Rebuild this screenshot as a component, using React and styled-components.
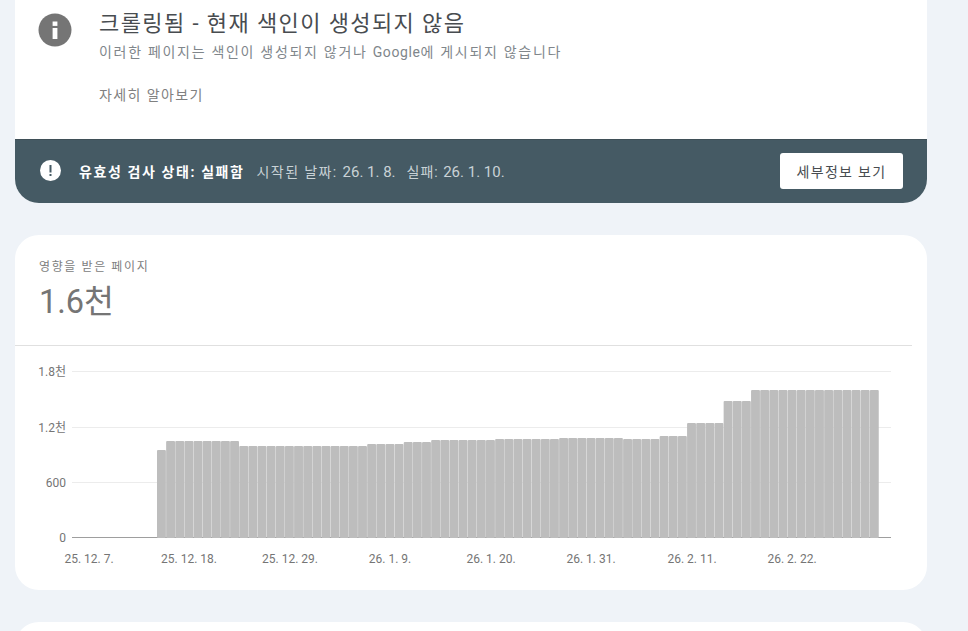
import React from 'react'
import styled, { createGlobalStyle } from 'styled-components'

const FONT = `Roboto, "Noto Sans CJK KR", "Noto Sans", sans-serif`

const GlobalStyle = createGlobalStyle`
  html, body {
    margin: 0;
    height: 100%;
    overflow: hidden;
    background: #eff3f8;
    font-family: ${FONT};
  }
`

const Page = styled.div`
  display: flex;
  flex-direction: column;
  gap: 32px;
  width: 912px;
  height: 631px;
  margin-left: 15px;
  overflow: hidden;
`

const Card = styled.section`
  flex: none;
  background: #fff;
  border-radius: 24px;
  overflow: hidden;
`

const TopCard = styled(Card)`
  border-radius: 0 0 24px 24px;
`

const Summary = styled.div`
  display: flex;
  height: 139px;
  box-sizing: border-box;
  padding: 9px 0 0 23px;
`

const InfoIcon = styled.svg`
  flex: none;
  width: 34px;
  height: 34px;
  margin-top: 4px;
  margin-right: 27px;
`

const Title = styled.h1`
  margin: 0;
  height: 30px;
  font-size: 22px;
  line-height: 30px;
  font-weight: 400;
  letter-spacing: 1.4px;
  color: #484c50;
`

const Subtitle = styled.p`
  margin: 3px 0 0;
  font-size: 14px;
  line-height: 20px;
  letter-spacing: 1.7px;
  color: #80868b;
`

// latin and digits keep their own width, only hangul runs wider
const Latin = styled.span`
  font-size: ${p => p.$size || 14}px;
  letter-spacing: ${p => p.$spacing}px;
`

const LearnMore = styled.a`
  display: block;
  margin-top: 23px;
  font-size: 14px;
  line-height: 20px;
  letter-spacing: 1.4px;
  color: #808080;
`

const Banner = styled.div`
  display: flex;
  align-items: center;
  height: 64px;
  padding: 0 24px 2px 25px;
  background: #455a64;
  border-top: 1px solid #3f4f57;
  box-sizing: border-box;
`

const BannerIcon = styled.svg`
  flex: none;
  width: 21px;
  height: 21px;
  margin-right: 18px;
`

const Status = styled.strong`
  font-size: 14px;
  font-weight: 700;
  letter-spacing: 1.6px;
  color: #fff;
`

const Meta = styled.span`
  margin-left: ${p => p.$gap}px;
  font-size: 14px;
  letter-spacing: ${p => p.$spacing}px;
  color: #c9d2d6;
`

const DetailsButton = styled.button`
  width: 123px;
  height: 36px;
  margin-left: auto;
  padding: 0;
  border: 0;
  border-radius: 3px;
  background: #fff;
  font-family: ${FONT};
  font-size: 14px;
  letter-spacing: 1.3px;
  color: #484c50;
`

const ChartCard = styled(Card)`
  height: 355px;
`

const LastCard = styled(Card)`
  height: 60px;
`

const MetricHead = styled.div`
  height: 111px;
  box-sizing: border-box;
  padding: 24px 0 0 24px;
  margin-right: 15px;
  border-bottom: 1px solid #e0e0e0;
`

const MetricLabel = styled.div`
  font-size: 12px;
  line-height: 16px;
  letter-spacing: 1.6px;
  color: #808080;
`

const MetricValue = styled.div`
  margin-top: 4px;
  font-size: 32.5px;
  line-height: 46px;
  font-weight: 400;
  color: #757575;
`

const Chart = styled.svg`
  display: block;
  width: 912px;
  height: 244px;
`

const AxisText = styled.text`
  font-family: ${FONT};
  font-size: 12px;
  fill: #757575;
`

// daily totals come in runs: [number of days, top of the bar in px]
const RUNS = [
  [1, 450], [8, 441], [14, 446], [4, 444], [3, 442], [7, 440],
  [7, 439], [7, 438], [4, 439], [3, 436], [4, 423], [3, 401], [14, 390]
]
const BARS = RUNS.flatMap(([count, top]) => Array(count).fill(top))
const BAR_WIDTH = 722 / BARS.length

// chart svg starts at page (15, 346)
const Y_TICKS = [
  { label: '1.8천', y: 371 },
  { label: '1.2천', y: 427 },
  { label: '600', y: 482 },
  { label: '0', y: 537 }
]
const X_TICKS = [
  { label: '25. 12. 7.', x: 89 },
  { label: '25. 12. 18.', x: 189 },
  { label: '25. 12. 29.', x: 290 },
  { label: '26. 1. 9.', x: 390 },
  { label: '26. 1. 20.', x: 491 },
  { label: '26. 1. 31.', x: 591 },
  { label: '26. 2. 11.', x: 692 },
  { label: '26. 2. 22.', x: 792 }
]

const App = () => (
  <>
    <GlobalStyle />
    <Page>
      <TopCard>
        <Summary>
          <InfoIcon viewBox="0 0 34 34">
            <circle cx="17" cy="17" r="16.5" fill="#757575" />
            <rect x="14.6" y="15" width="4.8" height="11" fill="#fff" />
            <rect x="14.6" y="8.5" width="4.8" height="4.4" fill="#fff" />
          </InfoIcon>
          <div>
            <Title>크롤링됨 - 현재 색인이 생성되지 않음</Title>
            <Subtitle>이러한 페이지는 색인이 생성되지 않거나 <Latin $spacing={0.6}>Google</Latin>에 게시되지 않습니다</Subtitle>
            <LearnMore>자세히 알아보기</LearnMore>
          </div>
        </Summary>
        <Banner>
          <BannerIcon viewBox="0 0 21 21">
            <circle cx="10.5" cy="10.5" r="10.5" fill="#fff" />
            <rect x="9.5" y="5" width="2" height="7.5" fill="#455a64" />
            <rect x="9.5" y="14" width="2" height="2" fill="#455a64" />
          </BannerIcon>
          <Status>유효성 검사 상태: 실패함</Status>
          <Meta $gap={12} $spacing={1.4}>시작된 날짜: <Latin $size={15} $spacing={0}>26. 1. 8.</Latin></Meta>
          <Meta $gap={11} $spacing={1}>실패: <Latin $size={15} $spacing={0}>26. 1. 10.</Latin></Meta>
          <DetailsButton>세부정보 보기</DetailsButton>
        </Banner>
      </TopCard>
      <ChartCard>
        <MetricHead>
          <MetricLabel>영향을 받은 페이지</MetricLabel>
          <MetricValue>1.6천</MetricValue>
        </MetricHead>
        <Chart viewBox="15 346 912 244">
          {Y_TICKS.slice(0, 3).map(t => (
            <line key={t.y} x1="72" x2="891" y1={t.y + 0.5} y2={t.y + 0.5} stroke="#ececec" />
          ))}
          <line x1="72" x2="891" y1="537.5" y2="537.5" stroke="#9e9e9e" />
          {Y_TICKS.map(t => (
            <AxisText key={t.label} x="66" y={t.y + 5} textAnchor="end">{t.label}</AxisText>
          ))}
          {BARS.map((top, i) => (
            <rect
              key={i}
              x={157 + i * BAR_WIDTH}
              y={top}
              width={BAR_WIDTH - 0.25}
              height={538 - top}
              rx="1"
              fill="#bdbdbd"
            />
          ))}
          {X_TICKS.map(t => (
            <AxisText key={t.label} x={t.x} y="563" textAnchor="middle">{t.label}</AxisText>
          ))}
        </Chart>
      </ChartCard>
      <LastCard />
    </Page>
  </>
)

export default App
